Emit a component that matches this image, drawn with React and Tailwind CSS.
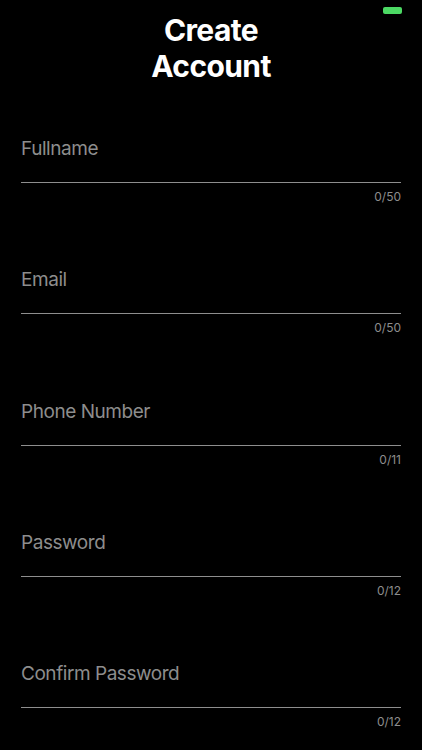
import { useState } from "react";

const fields = [
  { name: "fullname", label: "Fullname", max: 50 },
  { name: "email", label: "Email", max: 50 },
  { name: "phone", label: "Phone Number", max: 11 },
  { name: "password", label: "Password", max: 12 },
  { name: "confirm", label: "Confirm Password", max: 12 },
];

const Field = ({ label, max, value, onChange }) => (
  <div className="flex flex-col">
    <input
      type="text"
      value={value}
      maxLength={max}
      placeholder={label}
      onChange={onChange}
      className="h-6 w-full bg-transparent text-[19px] leading-6 tracking-[-0.45px] text-white placeholder:text-[#8d8d8d] outline-none"
    />
    <div className="mt-[21px] h-px w-full bg-[#8e8e8e]" />
    <p className="mt-[6px] h-4 text-right text-[12px] leading-4 text-[#8d8d8d]">
      {value.length}/{max}
    </p>
  </div>
);

const App = () => {
  const [form, setForm] = useState({
    fullname: "",
    email: "",
    phone: "",
    password: "",
    confirm: "",
  });

  return (
    <div
      className="relative min-h-[750px] w-full bg-black"
      style={{ fontFamily: "Inter, 'Noto Sans', sans-serif" }}
    >
      {/* battery indicator */}
      <div className="absolute right-[20px] top-[7px] h-[7px] w-[19px] rounded-[2px] bg-[#4cd964]" />

      <h1 className="pt-[12px] text-center text-[30px] font-bold leading-[36px] tracking-[-0.6px] text-white">
        Create
        <br />
        Account
      </h1>

      <div className="mt-[53px] flex flex-col gap-[63.25px] px-[21px]">
        {fields.map((f) => (
          <Field
            key={f.name}
            label={f.label}
            max={f.max}
            value={form[f.name]}
            onChange={(e) => setForm({ ...form, [f.name]: e.target.value })}
          />
        ))}
      </div>
    </div>
  );
};

export default App;
